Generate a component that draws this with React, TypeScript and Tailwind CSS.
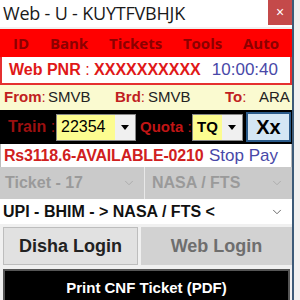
import { ChevronDown } from "lucide-react";

const sans = "font-['Liberation_Sans',Arial,sans-serif]";
const ui = "font-['Open_Sans','Noto_Sans',sans-serif]";

function Caret() {
  return (
    <div className="flex h-full w-[20px] items-center justify-center bg-[#f0f0f0]">
      <svg width="8" height="5" viewBox="0 0 8 5">
        <path d="M0 0h8L4 5z" fill="#000" />
      </svg>
    </div>
  );
}

export default function App() {
  return (
    <div className={`relative h-[300px] w-[300px] overflow-hidden bg-[#f0f0f0] ${sans}`}>
      <div className="flex h-full w-[294px] flex-col border-r-2 border-[#3c5a78] bg-[#f0f0f0]">
        {/* title bar */}
        <div className="flex h-[27px] shrink-0 items-center justify-between bg-white">
          <span className={`pl-[3px] text-[18px] tracking-[-0.2px] text-[#1a1a1a] ${ui}`}>Web - U - KUYTFVBHJK</span>
          <div className="flex h-[25px] w-[24px] items-center justify-center self-start bg-[#c44a4a] text-[14px] text-white">
            ×
          </div>
        </div>

        {/* menu */}
        <div className="mt-[2px] flex h-[28px] shrink-0 items-center justify-between bg-[#ff0000] px-[13px] text-[15px] font-bold text-[#8c0000]">
          <span className={ui}>ID</span>
          <span className={ui}>Bank</span>
          <span className={ui}>Tickets</span>
          <span className={ui}>Tools</span>
          <span className={ui}>Auto</span>
        </div>

        {/* pnr */}
        <div className="flex h-[28px] shrink-0 items-center justify-between border-x-2 border-b-2 border-[#e53030] bg-white pl-[7px] pr-[12px]">
          <span className="text-[16px] font-bold text-[#e01818]">
            Web PNR <span className="font-normal">:</span> XXXXXXXXXX
          </span>
          <span className="text-[17px] text-[#4848a8]">10:00:40</span>
        </div>

        {/* from */}
        <div className="flex h-[25px] shrink-0 items-center bg-[#fafad0] pl-[4px] text-[15px]">
          <span className="w-[44px] font-bold text-[#c02020]">From<span className="font-normal">:</span></span>
          <span className="w-[67px] text-[#222]">SMVB</span>
          <span className="w-[33px] font-bold text-[#c02020]">Brd<span className="font-normal">:</span></span>
          <span className="w-[77px] text-[#222]">SMVB</span>
          <span className="w-[34px] font-bold text-[#c02020]">To<span className="font-normal">:</span></span>
          <span className="text-[#222]">ARA</span>
        </div>

        {/* train */}
        <div className="flex h-[34px] shrink-0 items-center whitespace-nowrap bg-black pl-[8px] text-[16px]">
          <span className="w-[48px] shrink-0 font-bold text-[#9c1010]">Train <span className="font-normal">:</span></span>
          <div className="flex h-[27px] w-[80px] shrink-0 items-center border border-[#888] bg-[#fcfc90]">
            <span className="flex-1 pl-[4px] text-[16px] text-black">22354</span>
            <Caret />
          </div>
          <span className="w-[56px] shrink-0 pl-[4px] text-[15px] font-bold text-[#c01515]">Quota <span className="font-normal">:</span></span>
          <div className="flex h-[27px] w-[51px] shrink-0 items-center border border-[#888] bg-[#fcfc90]">
            <span className="flex-1 pl-[4px] text-[15px] font-bold text-black">TQ</span>
            <Caret />
          </div>
          <div className="ml-[3px] flex h-[30px] w-[45px] shrink-0 items-center justify-center border-2 border-[#2a5a8a] bg-[#d4e6f4] text-[20px] font-bold text-black">
            Xx
          </div>
        </div>

        {/* rs */}
        <div className="flex h-[23px] shrink-0 items-center border-x border-[#bbb] bg-white pl-[3px] text-[16px]">
          <span className="w-[205px] font-bold tracking-[-0.2px] text-[#d02020]">Rs3118.6-AVAILABLE-0210</span>
          <span className="text-[17px] text-[#4848a8]">Stop Pay</span>
        </div>

        {/* ticket */}
        <div className="flex h-[32px] shrink-0 items-center bg-[#cacaca] text-[16px] font-bold text-[#9a9a9a]">
          <div className="flex h-full w-[145px] items-center justify-between border-r border-[#e8e8e8] pl-[5px] pr-[8px]">
            <span>Ticket - 17</span>
            <ChevronDown size={14} strokeWidth={1.5} className="text-[#a8a8a8]" />
          </div>
          <div className="flex h-full flex-1 items-center justify-between pl-[7px] pr-[8px]">
            <span>NASA / FTS</span>
            <ChevronDown size={14} strokeWidth={1.5} className="text-[#a8a8a8]" />
          </div>
        </div>

        {/* upi */}
        <div className="flex h-[25px] shrink-0 items-center justify-between bg-white pl-[3px] pr-[8px] text-[16px] font-bold text-[#111]">
          <span>UPI - BHIM - &gt; NASA / FTS &lt;</span>
          <ChevronDown size={14} strokeWidth={1.5} className="text-[#555]" />
        </div>

        {/* login */}
        <div className="flex h-[41px] shrink-0 items-stretch gap-[3px] bg-[#f0f0f0] pt-[3px] pl-[3px]">
          <div className="flex w-[135px] items-center justify-center border border-[#bdbdbd] bg-[#e1e1e1] text-[18px] font-bold text-[#222]">
            Disha Login
          </div>
          <div className="flex flex-1 items-center justify-center bg-[#d2d2d2] text-[18px] font-bold text-[#6e6e6e]">
            Web Login
          </div>
        </div>

        {/* print */}
        <div className="mt-[4px] ml-[3px] mr-[2px] flex flex-1 items-start justify-center border-2 border-[#555] bg-black pt-[6px] text-[15px] font-bold text-white">
          Print CNF Ticket (PDF)
        </div>
      </div>
    </div>
  );
}
